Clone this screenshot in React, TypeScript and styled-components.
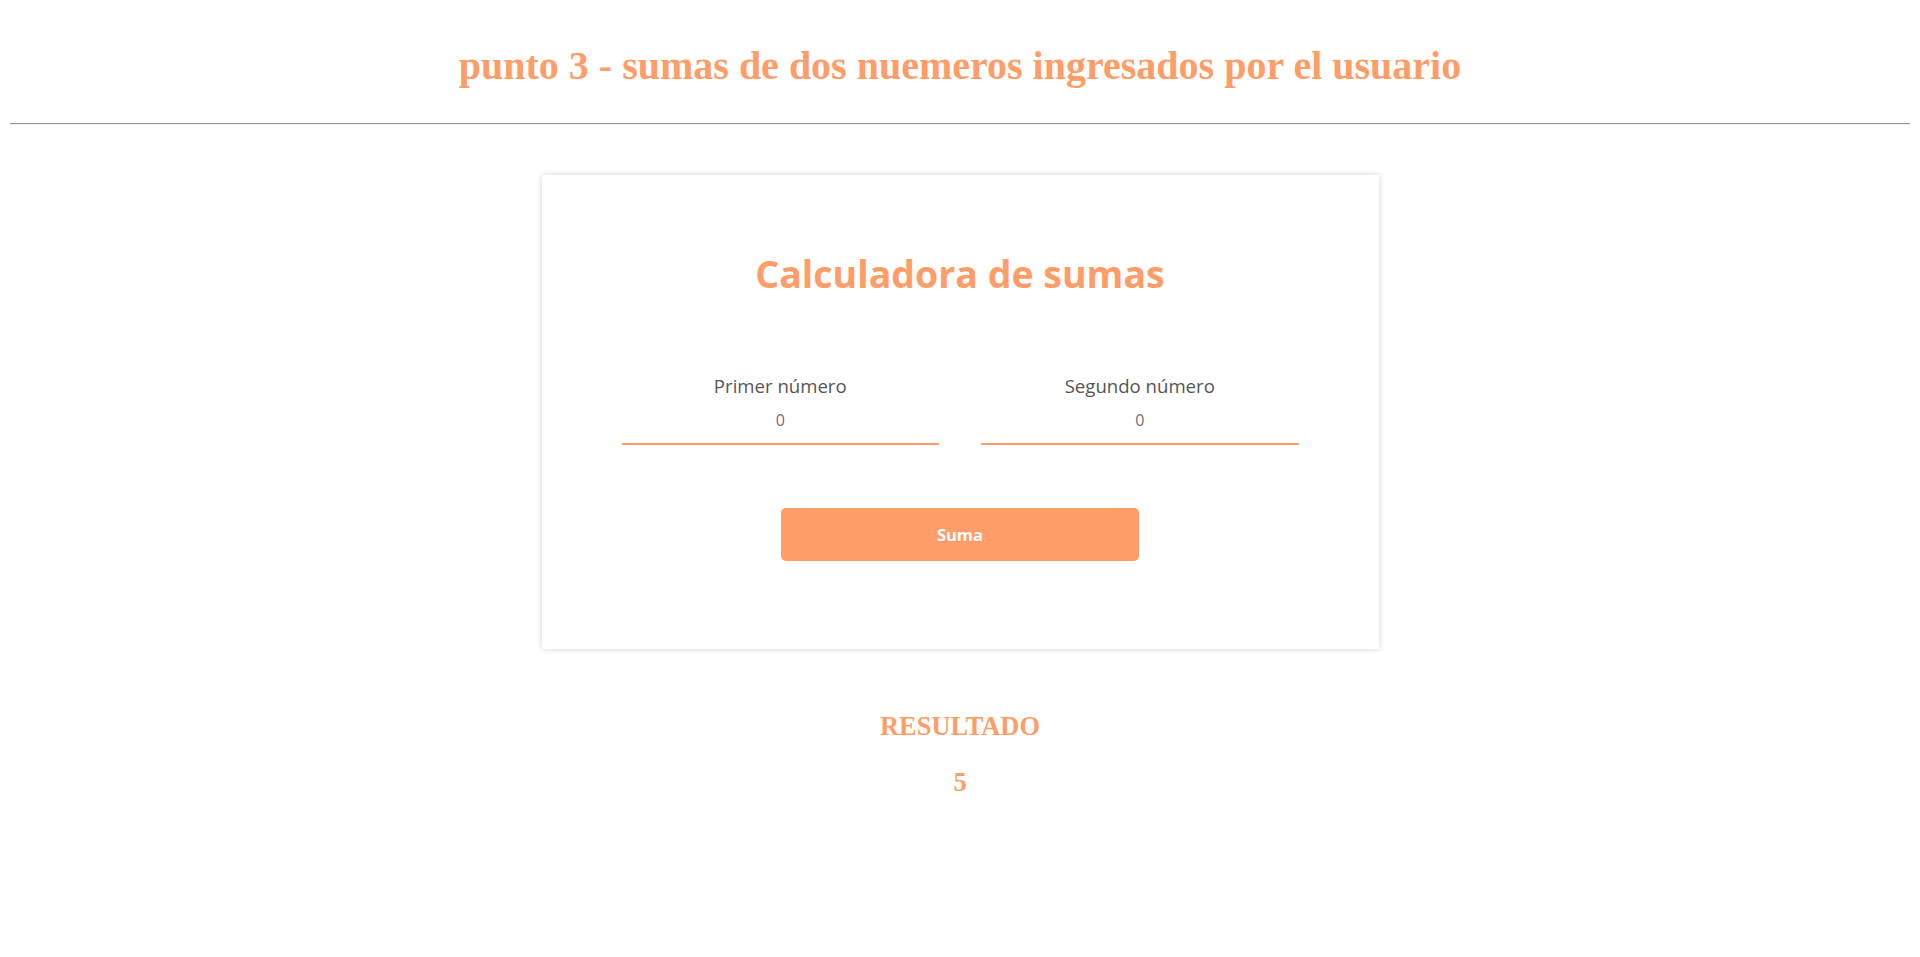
import React, { useState } from "react";
import styled, { createGlobalStyle } from "styled-components";

const ORANGE = "#ff9d69";

const GlobalStyle = createGlobalStyle`
  html, body {
    margin: 0;
    padding: 0;
    background: #ffffff;
  }
  body {
    font-family: "Liberation Serif", "Times New Roman", serif;
  }
`;

const Page = styled.div`
  display: flex;
  flex-direction: column;
  align-items: stretch;
  min-height: 957px;
`;

const Header = styled.header`
  padding-top: 43px;
  display: flex;
  flex-direction: column;
`;

const PageTitle = styled.h1`
  margin: 0;
  text-align: center;
  font-family: "Liberation Serif", "Times New Roman", serif;
  font-weight: 700;
  font-size: 40px;
  line-height: 46px;
  color: ${ORANGE};
`;

const Divider = styled.hr`
  margin: 34px 10px 0;
  border: 0;
  border-top: 1px solid #9a9a9a;
  border-bottom: 1px solid #eeeeee;
  height: 0;
`;

const Main = styled.main`
  display: flex;
  flex-direction: column;
  align-items: center;
  padding-top: 50px;
`;

const Card = styled.section`
  width: 837px;
  box-sizing: border-box;
  padding: 70px 80px 88px;
  background: #ffffff;
  box-shadow: 0 0 6px rgba(0, 0, 0, 0.18);
  display: flex;
  flex-direction: column;
  align-items: center;
  font-family: "Open Sans", "Noto Sans", sans-serif;
`;

const CardTitle = styled.h2`
  margin: 0;
  font-family: "Open Sans", "Noto Sans", sans-serif;
  font-weight: 700;
  font-size: 37.5px;
  line-height: 58px;
  color: ${ORANGE};
  text-align: center;
`;

const Fields = styled.div`
  margin-top: 70px;
  width: 100%;
  display: grid;
  grid-template-columns: 1fr 1fr;
  column-gap: 42px;
`;

const Field = styled.label`
  display: flex;
  flex-direction: column;
  align-items: stretch;
`;

const FieldLabel = styled.span`
  font-size: 18.6px;
  line-height: 26px;
  color: #555555;
  text-align: center;
`;

const NumberInput = styled.input`
  box-sizing: border-box;
  height: 46px;
  width: 100%;
  border: 0;
  border-bottom: 2px solid ${ORANGE};
  outline: none;
  background: transparent;
  text-align: center;
  font-family: "Open Sans", "Noto Sans", sans-serif;
  font-size: 16px;
  color: #666666;
  padding: 0 0 3px;
  -moz-appearance: textfield;

  &::placeholder {
    color: #707070;
    opacity: 1;
  }

  &::-webkit-inner-spin-button,
  &::-webkit-outer-spin-button {
    -webkit-appearance: none;
    margin: 0;
  }
`;

const SumButton = styled.button`
  margin-top: 63px;
  width: 358px;
  height: 53px;
  border: 0;
  border-radius: 5px;
  background: ${ORANGE};
  color: #ffffff;
  font-family: "Open Sans", "Noto Sans", sans-serif;
  font-weight: 700;
  font-size: 16.5px;
  cursor: pointer;
`;

const ResultBlock = styled.div`
  margin-top: 62px;
  display: flex;
  flex-direction: column;
  align-items: center;
  gap: 26px;
`;

const ResultText = styled.h3`
  margin: 0;
  font-family: "Liberation Serif", "Times New Roman", serif;
  font-weight: 700;
  font-size: 26.4px;
  line-height: 30px;
  color: ${ORANGE};
`;

export default function App() {
  const [a, setA] = useState("");
  const [b, setB] = useState("");
  const [result, setResult] = useState<number>(5);

  return (
    <Page>
      <GlobalStyle />
      <Header>
        <PageTitle>punto 3 - sumas de dos nuemeros ingresados por el usuario</PageTitle>
        <Divider />
      </Header>
      <Main>
        <Card>
          <CardTitle>Calculadora de sumas</CardTitle>
          <Fields>
            <Field>
              <FieldLabel>Primer número</FieldLabel>
              <NumberInput
                type="number"
                placeholder="0"
                value={a}
                onChange={(e) => setA(e.target.value)}
              />
            </Field>
            <Field>
              <FieldLabel>Segundo número</FieldLabel>
              <NumberInput
                type="number"
                placeholder="0"
                value={b}
                onChange={(e) => setB(e.target.value)}
              />
            </Field>
          </Fields>
          <SumButton onClick={() => setResult((Number(a) || 0) + (Number(b) || 0))}>
            Suma
          </SumButton>
        </Card>
        <ResultBlock>
          <ResultText>RESULTADO</ResultText>
          <ResultText>{result}</ResultText>
        </ResultBlock>
      </Main>
    </Page>
  );
}
